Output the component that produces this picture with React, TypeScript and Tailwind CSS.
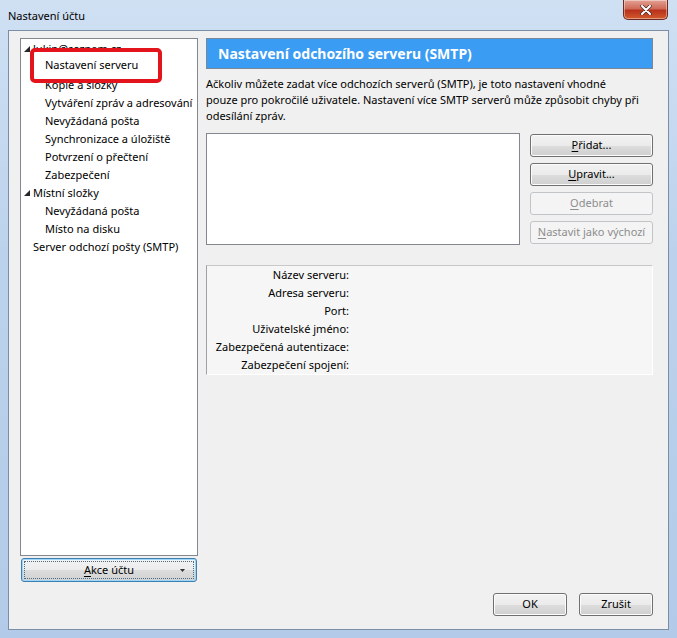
import React from "react";

const font = { fontFamily: '"Segoe UI", "Noto Sans", sans-serif' };

type TreeItem = { label: string; level: 0 | 1; expanded?: boolean };

const treeItems: TreeItem[] = [
  { label: "lukin@seznam.cz", level: 0, expanded: true },
  { label: "Nastavení serveru", level: 1 },
  { label: "Kopie a složky", level: 1 },
  { label: "Vytváření zpráv a adresování", level: 1 },
  { label: "Nevyžádaná pošta", level: 1 },
  { label: "Synchronizace a úložiště", level: 1 },
  { label: "Potvrzení o přečtení", level: 1 },
  { label: "Zabezpečení", level: 1 },
  { label: "Místní složky", level: 0, expanded: true },
  { label: "Nevyžádaná pošta", level: 1 },
  { label: "Místo na disku", level: 1 },
  { label: "Server odchozí pošty (SMTP)", level: 0 },
];

const detailLabels = [
  "Název serveru:",
  "Adresa serveru:",
  "Port:",
  "Uživatelské jméno:",
  "Zabezpečená autentizace:",
  "Zabezpečení spojení:",
];

function Expander() {
  return (
    <svg viewBox="0 0 6 6" className="h-[6px] w-[6px]" aria-hidden>
      <path d="M6 0 L6 6 L0 6 Z" fill="#262626" />
    </svg>
  );
}

function WinButton({
  children,
  disabled,
  className = "",
}: {
  children: React.ReactNode;
  disabled?: boolean;
  className?: string;
}) {
  return (
    <button
      type="button"
      disabled={disabled}
      className={`flex h-[23px] items-center justify-center rounded-[3px] border text-[11px] ${
        disabled
          ? "border-[#c2c5c7] bg-[#f4f4f4] text-[#8d8d8d]"
          : "border-[#707070] bg-[linear-gradient(#f2f2f2_0%,#ebebeb_50%,#dddddd_51%,#cfcfcf_100%)] text-black shadow-[inset_0_0_0_1px_#fcfcfc]"
      } ${className}`}
    >
      {children}
    </button>
  );
}

export default function App() {
  return (
    <div
      className="relative flex h-[638px] w-[677px] flex-col overflow-hidden bg-[linear-gradient(180deg,#cfe0f3_0%,#bcd2ec_40%,#b3cbe8_100%)]"
      style={font}
    >
      {/* title bar */}
      <div className="flex h-[30px] shrink-0 items-center justify-between pl-[8px] pr-[9px]">
        <span className="pt-[2px] text-[11px] text-black">Nastavení účtu</span>
        <div className="flex h-[20px] w-[45px] items-center justify-center self-start rounded-b-[5px] border border-t-0 border-[#6d2a22] bg-[linear-gradient(180deg,#e3a294_0%,#cf6a58_45%,#b8321c_55%,#d25a2c_100%)] shadow-[inset_0_0_0_1px_rgba(255,255,255,0.4)]">
          <svg viewBox="0 0 12 10" className="h-[10px] w-[12px]" aria-hidden>
            <path d="M2 1 L10 9 M10 1 L2 9" stroke="#4a2a25" strokeWidth="3.4" strokeLinecap="round" />
            <path d="M2 1 L10 9 M10 1 L2 9" stroke="#ffffff" strokeWidth="2" strokeLinecap="round" />
          </svg>
        </div>
      </div>

      {/* client area */}
      <div className="mx-[8px] mb-[8px] flex flex-1 flex-col border border-[#7a8fa6] bg-[#f0f0f0] pl-[11px] pr-[15px] pt-[7px]">
        <div className="flex gap-[8px]">
          {/* left column */}
          <div className="flex w-[178px] shrink-0 flex-col">
            <div className="relative h-[518px] border border-[#828790] bg-white pt-[1px]">
              {treeItems.map((item, i) => (
                <div
                  key={i}
                  className={`flex h-[18px] items-center text-[11px] text-black ${
                    item.level === 0 ? "pl-[3px]" : "pl-[24px]"
                  }`}
                >
                  {item.level === 0 && (
                    <span className="flex w-[9px] items-center">{item.expanded && <Expander />}</span>
                  )}
                  <span className="whitespace-nowrap">{item.label}</span>
                </div>
              ))}
              {/* red highlight annotation */}
              <div className="absolute left-[9px] top-[9px] flex h-[35px] w-[132px] items-center rounded-[5px] border-[4px] border-[#e3141b] bg-white pl-[11px] text-[11px] text-black">
                Nastavení serveru
              </div>
            </div>
            <div className="mt-[2px] px-[1px]">
              <button
                type="button"
                className="relative flex h-[24px] w-full items-center justify-center rounded-[3px] border border-[#3c7fb1] bg-[linear-gradient(#f3f3f3_0%,#ececec_50%,#dcdcdc_51%,#d2d2d2_100%)] text-[11px] text-black shadow-[inset_0_0_0_1px_#9fd5f6]"
              >
                <span className="pointer-events-none absolute inset-[2px] border border-dotted border-[#4d6b80]" />
                <span>
                  <span className="underline underline-offset-2">A</span>kce účtu
                </span>
                <svg viewBox="0 0 5 3" className="absolute right-[11px] top-[10px] h-[3px] w-[5px]" aria-hidden>
                  <path d="M0 0 H5 L2.5 3 Z" fill="#333" />
                </svg>
              </button>
            </div>
          </div>

          {/* right column */}
          <div className="flex flex-1 flex-col">
            <div className="flex h-[31px] items-center border border-[#7a8799] bg-[#3b9cf3] pl-[11px]">
              <span className="text-[14px] font-bold text-white">Nastavení odchozího serveru (SMTP)</span>
            </div>
            <p className="mt-[7px] text-[11px] leading-[16px] text-black">
              Ačkoliv můžete zadat více odchozích serverů (SMTP), je toto nastavení vhodné
              <br />
              pouze pro pokročilé uživatele. Nastavení více SMTP serverů může způsobit chyby při
              <br />
              odesílání zpráv.
            </p>
            <div className="mt-[9px] flex gap-[10px]">
              <div className="h-[112px] w-[314px] shrink-0 border border-[#828790] bg-white" />
              <div className="flex flex-1 flex-col gap-[6px] pt-[1px]">
                <WinButton>
                  <span>
                    <span className="underline underline-offset-2">P</span>řidat...
                  </span>
                </WinButton>
                <WinButton>
                  <span>
                    <span className="underline underline-offset-2">U</span>pravit...
                  </span>
                </WinButton>
                <WinButton disabled>
                  <span>
                    <span className="underline underline-offset-2">O</span>debrat
                  </span>
                </WinButton>
                <WinButton disabled>
                  <span>
                    <span className="underline underline-offset-2">N</span>astavit jako výchozí
                  </span>
                </WinButton>
              </div>
            </div>
            <div className="mt-[20px] h-[110px] border border-b-white border-l-[#a0a0a0] border-r-white border-t-[#c8c8c8] bg-[#f6f6f6]">
              {detailLabels.map((label) => (
                <div key={label} className="flex h-[18px] items-center">
                  <span className="w-[142px] whitespace-nowrap text-right text-[11px] text-black">{label}</span>
                </div>
              ))}
            </div>
          </div>
        </div>

        {/* bottom buttons */}
        <div className="mt-[11px] flex justify-end gap-[12px]">
          <WinButton className="w-[74px]">OK</WinButton>
          <WinButton className="w-[74px]">Zrušit</WinButton>
        </div>
      </div>
    </div>
  );
}
